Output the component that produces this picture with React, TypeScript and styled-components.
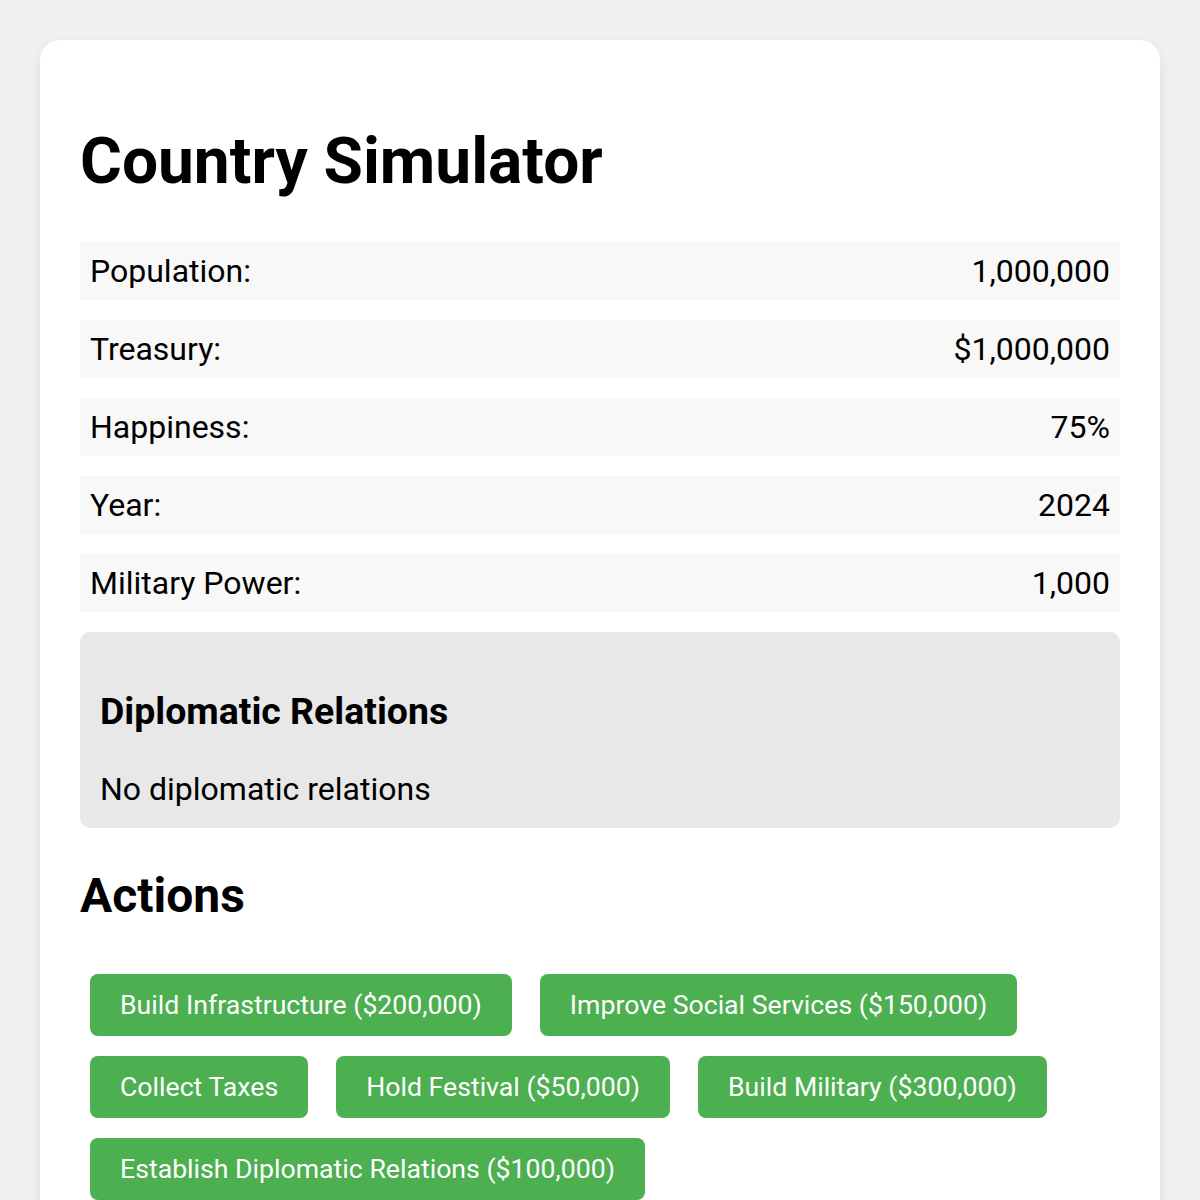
import React from "react";
import styled, { createGlobalStyle } from "styled-components";

const GlobalStyle = createGlobalStyle`
  html, body {
    margin: 0;
    padding: 0;
    background: #f0f0f0;
    font-family: Roboto, "Liberation Sans", Arial, sans-serif;
    color: #000;
  }
  body {
    padding: 40px;
  }
`;

const Card = styled.div`
  background: #ffffff;
  border-radius: 20px;
  padding: 40px;
  box-shadow: 0 4px 12px rgba(0, 0, 0, 0.08);
`;

const Title = styled.h1`
  font-size: 64px;
  font-weight: 700;
  margin: 43.6px 0;
  line-height: normal;
`;

const StatList = styled.div`
  display: flex;
  flex-direction: column;
  gap: 20px;
`;

const StatRow = styled.div`
  display: flex;
  justify-content: space-between;
  align-items: center;
  background: #f8f8f8;
  padding: 10px;
  font-size: 32px;
  line-height: normal;
`;

const DiplomacyBox = styled.div`
  background: #e8e8e8;
  border-radius: 10px;
  padding: 20px;
  margin-top: 20px;
`;

const SubHeading = styled.h3`
  font-size: 37.44px;
  font-weight: 700;
  margin: 37px 0;
  line-height: normal;
`;

const Note = styled.div`
  font-size: 32px;
  line-height: normal;
`;

const SectionHeading = styled.h2`
  font-size: 48px;
  font-weight: 700;
  margin: 39.3px 0;
  line-height: normal;
`;

const ButtonGrid = styled.div`
  display: flex;
  flex-wrap: wrap;
  column-gap: 28px;
  row-gap: 20px;
  padding: 10px;
`;

const ActionButton = styled.button`
  background: #4caf50;
  color: #ffffff;
  border: none;
  border-radius: 8px;
  padding: 15.1px 30px;
  font-family: Roboto, "Liberation Sans", Arial, sans-serif;
  font-size: 26.67px;
  line-height: normal;
  cursor: pointer;
`;

const stats: [string, string][] = [
  ["Population:", "1,000,000"],
  ["Treasury:", "$1,000,000"],
  ["Happiness:", "75%"],
  ["Year:", "2024"],
  ["Military Power:", "1,000"],
];

const actions = [
  "Build Infrastructure ($200,000)",
  "Improve Social Services ($150,000)",
  "Collect Taxes",
  "Hold Festival ($50,000)",
  "Build Military ($300,000)",
  "Establish Diplomatic Relations ($100,000)",
];

export default function App() {
  return (
    <>
      <GlobalStyle />
      <Card>
        <Title>Country Simulator</Title>
        <StatList>
          {stats.map(([label, value]) => (
            <StatRow key={label}>
              <span>{label}</span>
              <span>{value}</span>
            </StatRow>
          ))}
        </StatList>
        <DiplomacyBox>
          <SubHeading>Diplomatic Relations</SubHeading>
          <Note>No diplomatic relations</Note>
        </DiplomacyBox>
        <SectionHeading>Actions</SectionHeading>
        <ButtonGrid>
          {actions.map((a) => (
            <ActionButton key={a}>{a}</ActionButton>
          ))}
        </ButtonGrid>
      </Card>
    </>
  );
}
